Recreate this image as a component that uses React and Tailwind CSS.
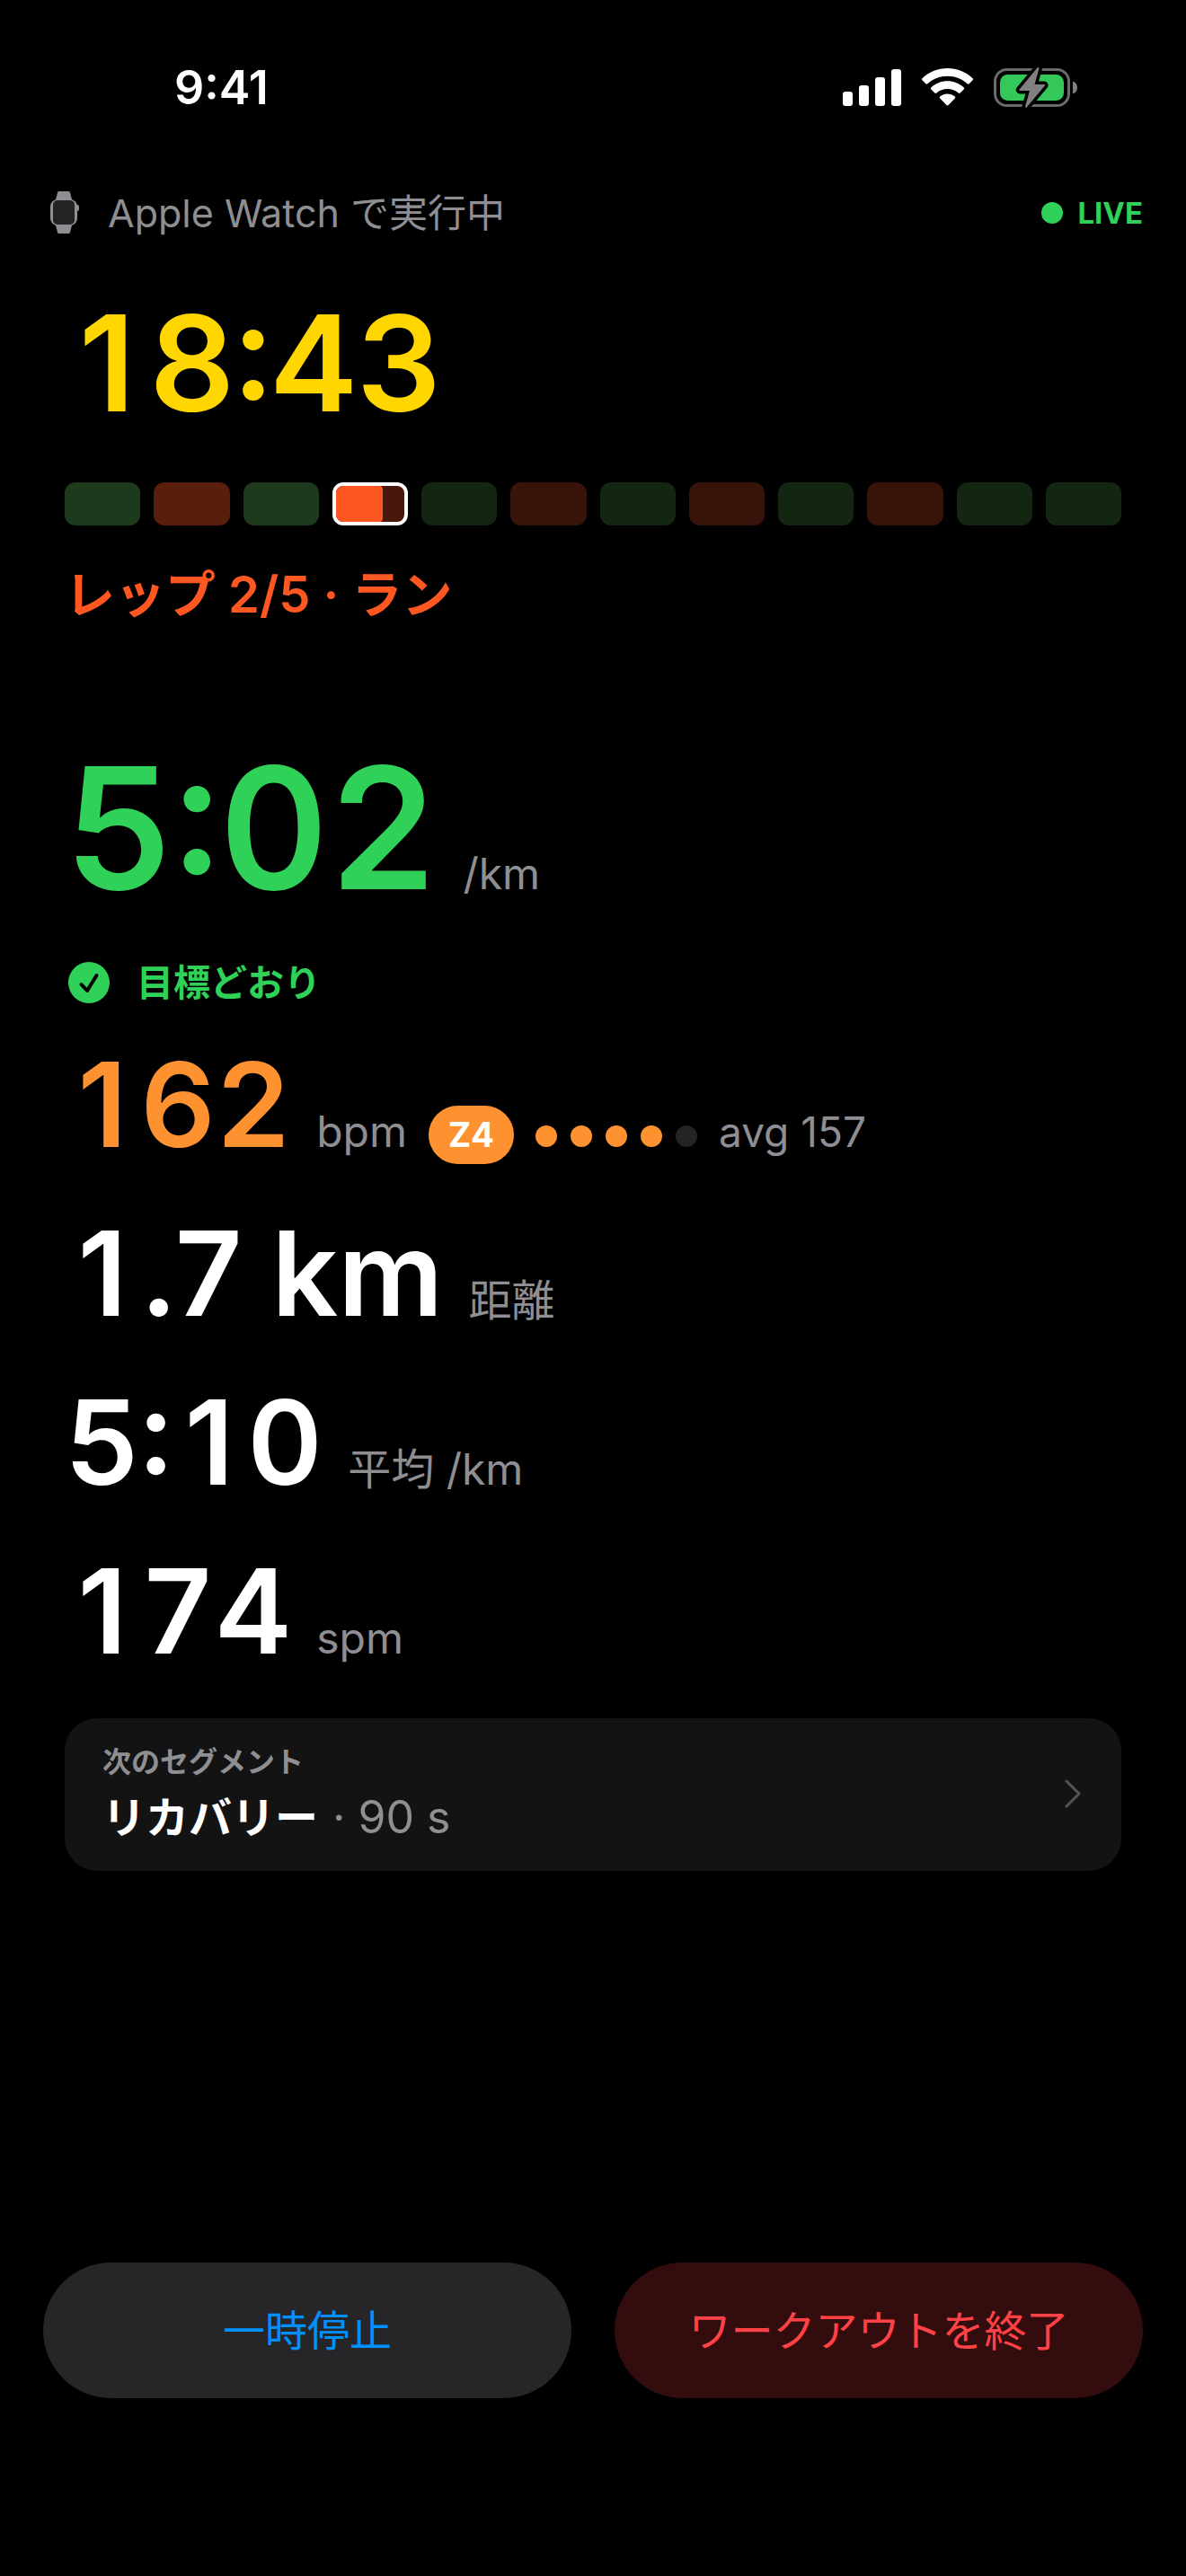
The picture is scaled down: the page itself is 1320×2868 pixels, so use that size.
const segments = [
    'bg-[#1d3a1c]',
    'bg-[#5a1e0c]',
    'bg-[#1d3a1c]',
    'current',
    'bg-[#122612]',
    'bg-[#381309]',
    'bg-[#122612]',
    'bg-[#381309]',
    'bg-[#122612]',
    'bg-[#381309]',
    'bg-[#122612]',
    'bg-[#122612]',
];

const zone = 4;
const segmentProgress = 69;

function StatusIcons() {
    return (
        <svg width="262" height="48" viewBox="0 0 262 48" fill="none" aria-hidden="true">
            <g fill="#fff">
                <rect x="0" y="28" width="11" height="16" rx="3" />
                <rect x="18" y="21" width="11" height="23" rx="3" />
                <rect x="36" y="12" width="11" height="32" rx="3" />
                <rect x="54" y="3" width="11" height="41" rx="3" />
            </g>
            <g transform="translate(88 2)" fill="#fff">
                <path d="M28.500 0C39.500 0 49.500 4.300 56.600 11.300C57.200 11.900 57.200 12.700 56.600 13.300L52.600 17.300C52.100 17.800 51.300 17.800 50.700 17.300C45 11.800 37.100 8.700 28.500 8.700C19.900 8.700 12 11.800 6.300 17.300C5.700 17.800 4.900 17.800 4.400 17.300L.4 13.300C-.2 12.700-.2 11.900.4 11.300C7.500 4.300 17.500 0 28.500 0Z" />
                <path d="M28.500 14.300C35.500 14.300 42 17 46.700 21.400C47.300 22 47.300 22.800 46.700 23.400L42.600 27.500C42.100 28 41.300 28 40.700 27.500C37.400 24.700 33.100 23 28.500 23C23.900 23 19.600 24.700 16.300 27.500C15.700 28 14.900 28 14.400 27.500L10.300 23.400C9.700 22.800 9.700 22 10.300 21.400C15 17 21.500 14.300 28.500 14.300Z" />
                <path d="M28.500 28.600C31.600 28.600 34.500 29.700 36.800 31.600C37.400 32.100 37.400 33 36.800 33.600L29.500 41C28.900 41.600 28.100 41.600 27.500 41L20.200 33.600C19.600 33 19.600 32.100 20.200 31.600C22.500 29.700 25.400 28.600 28.500 28.600Z" />
            </g>
            <g transform="translate(168 2)">
                <rect x="1.500" y="1.500" width="82" height="40" rx="13" stroke="#6b6b6b" strokeWidth="3" />
                <path d="M88 14.500C91 15.500 93 18 93 21.500C93 25 91 27.500 88 28.500Z" fill="#808080" />
                <rect x="7" y="7" width="71" height="29" rx="8.500" fill="#34c759" />
                <path
                    d="M48.500-.5L28.500 23.500C28 24.200 28.400 25 29.200 25H40L35 42.500C34.800 43.600 36 44.200 36.900 43.200L56.800 19.500C57.400 18.700 57 18 56.100 18H45.500L50.400.5C50.700-.8 49.400-1.500 48.500-.5Z"
                    fill="#808080"
                    stroke="#000"
                    strokeWidth="7"
                    strokeLinejoin="round"
                    paintOrder="stroke"
                />
            </g>
        </svg>
    );
}

function WatchIcon() {
    return (
        <svg width="32" height="48" viewBox="0 0 32 48" aria-hidden="true">
            <path
                d="M8 1.500C8.300.5 9 0 10 0H20C21 0 21.700.5 22 1.500L24 9L27 13H3L6 9ZM3 34H27L24 38L22 45.500C21.700 46.500 21 47 20 47H10C9 47 8.300 46.500 8 45.500L6 38Z"
                fill="#8e8e93"
            />
            <rect x="0" y="9" width="30" height="29" rx="8" fill="#8e8e93" />
            <rect x="28" y="15" width="4" height="7" rx="2" fill="#8e8e93" />
            <rect x="3" y="10" width="24" height="27" rx="5" fill="#242426" />
        </svg>
    );
}

function CheckIcon() {
    return (
        <svg width="46" height="46" viewBox="0 0 46 46" aria-hidden="true">
            <circle cx="23" cy="23" r="23" fill="#30d158" />
            <path
                d="M14.500 25L21 32L31.500 15"
                fill="none"
                stroke="#000"
                strokeWidth="4"
                strokeLinecap="round"
                strokeLinejoin="round"
            />
        </svg>
    );
}

// Inter's tabular "1" has a foot, so the plain "1" is centred in a digit-wide slot instead
function Digits({ value, slot }) {
    return value.split(/(1)/).map((part, i) =>
        part === '1' ? (
            <span key={i} className={`inline-block text-center normal-nums ${slot}`}>
                1
            </span>
        ) : (
            part
        )
    );
}

function Metric({ value, color = 'text-white', nums = 'tabular-nums', children }) {
    return (
        <div className="flex items-baseline">
            <span className={`text-[130px] leading-[140px] font-semibold whitespace-pre ${nums} ${color}`}>
                <Digits value={value} slot="w-[84px]" />
            </span>
            <div className="ml-7 flex items-baseline text-[48px] leading-[60px] text-[#8e8e93]">{children}</div>
        </div>
    );
}

export default function App() {
    return (
        <div
            lang="ja"
            className="flex min-h-screen flex-col bg-black pb-[198px] font-[Inter,'Noto_Sans_CJK_JP',sans-serif] text-white"
        >
            <div className="flex items-center justify-between pt-[68px] pr-[120px] pl-[194px]">
                <span className="text-[52px] leading-[60px] font-semibold">9:41</span>
                <StatusIcons />
            </div>

            <header className="mt-[79px] flex items-center justify-between px-12">
                <div className="flex items-center gap-8 pl-2 text-[43px] leading-[60px] text-[#8e8e93]">
                    <WatchIcon />
                    <span>Apple Watch で実行中</span>
                </div>
                <div className="flex items-center gap-4 text-[33px] leading-[60px] font-bold text-[#30d158]">
                    <span className="size-6 rounded-full bg-[#30d158]" />
                    <span>LIVE</span>
                </div>
            </header>

            <main className="flex flex-col px-[72px]">
                <div className="mt-[58px] text-[148px] leading-[160px] font-semibold text-[#ffd600] tabular-nums">
                    <Digits value="18:43" slot="w-[94px]" />
                </div>

                <div className="mt-[52px] grid grid-cols-12 gap-[15px]">
                    {segments.map((segment, i) =>
                        segment === 'current' ? (
                            <div key={i} className="h-12 overflow-hidden rounded-xl border-4 border-white bg-[#4a180b]">
                                <div
                                    className="h-full rounded-r-sm bg-[#ff5722]"
                                    style={{ width: `${segmentProgress}%` }}
                                />
                            </div>
                        ) : (
                            <div key={i} className={`h-12 rounded-xl ${segment}`} />
                        )
                    )}
                </div>

                <h1 className="mt-[37px] text-[56px] leading-[80px] font-semibold text-[#ff5722]">
                    レップ 2/5 · ラン
                </h1>

                <div className="mt-[120px] flex items-baseline">
                    <span className="text-[188px] leading-[200px] font-semibold text-[#30d158] tabular-nums">
                        5:02
                    </span>
                    <span className="ml-7 text-[48px] leading-[60px] text-[#8e8e93]">/km</span>
                </div>

                <div className="mt-[42px] flex items-center gap-[30px] pl-1 text-[41px] leading-[60px] font-semibold text-[#30d158]">
                    <CheckIcon />
                    <span>目標どおり</span>
                </div>

                <div className="mt-9 flex flex-col gap-12">
                    <Metric value="162" color="text-[#ff9230]">
                        <span>bpm</span>
                        <span className="ml-6 rounded-full bg-[#ff9230] px-[22px] text-[38px] leading-[65px] font-bold text-white">
                            Z{zone}
                        </span>
                        <div className="ml-6 flex gap-[15px]">
                            {[1, 2, 3, 4, 5].map((n) => (
                                <span
                                    key={n}
                                    className={`size-6 rounded-full ${n <= zone ? 'bg-[#ff9230]' : 'bg-[#242426]'}`}
                                />
                            ))}
                        </div>
                        <span className="ml-6 text-[46px]">avg 157</span>
                    </Metric>
                    <Metric value="1.7 km" nums="normal-nums">
                        距離
                    </Metric>
                    <Metric value="5:10">平均 /km</Metric>
                    <Metric value="174">spm</Metric>
                </div>

                <button
                    type="button"
                    className="mt-[49px] flex items-center justify-between rounded-[36px] bg-[#131313] pt-[29px] pr-[45px] pb-[31px] pl-[42px] text-left"
                >
                    <span className="flex flex-col gap-[14px]">
                        <span className="text-[32px] leading-[40px] font-semibold text-[#8e8e93]">次のセグメント</span>
                        <span className="flex items-baseline gap-4">
                            <span className="text-[48px] leading-[56px] font-semibold">リカバリー</span>
                            <span className="text-[50px] leading-[54px] text-[#8e8e93]">· 90 s</span>
                        </span>
                    </span>
                    <svg width="18" height="32" viewBox="0 0 18 32" fill="none" aria-hidden="true">
                        <path
                            d="M2 2L16 16L2 30"
                            stroke="#545456"
                            strokeWidth="3"
                            strokeLinecap="round"
                            strokeLinejoin="round"
                        />
                    </svg>
                </button>
            </main>

            <footer className="mt-auto grid grid-cols-2 gap-12 px-12 text-[47px] leading-[71px]">
                <button type="button" className="rounded-full bg-[#262628] py-10 text-[#0091ff]">
                    一時停止
                </button>
                <button type="button" className="rounded-full bg-[#330c0e] py-10 text-[#ff4245]">
                    ワークアウトを終了
                </button>
            </footer>
        </div>
    );
}
